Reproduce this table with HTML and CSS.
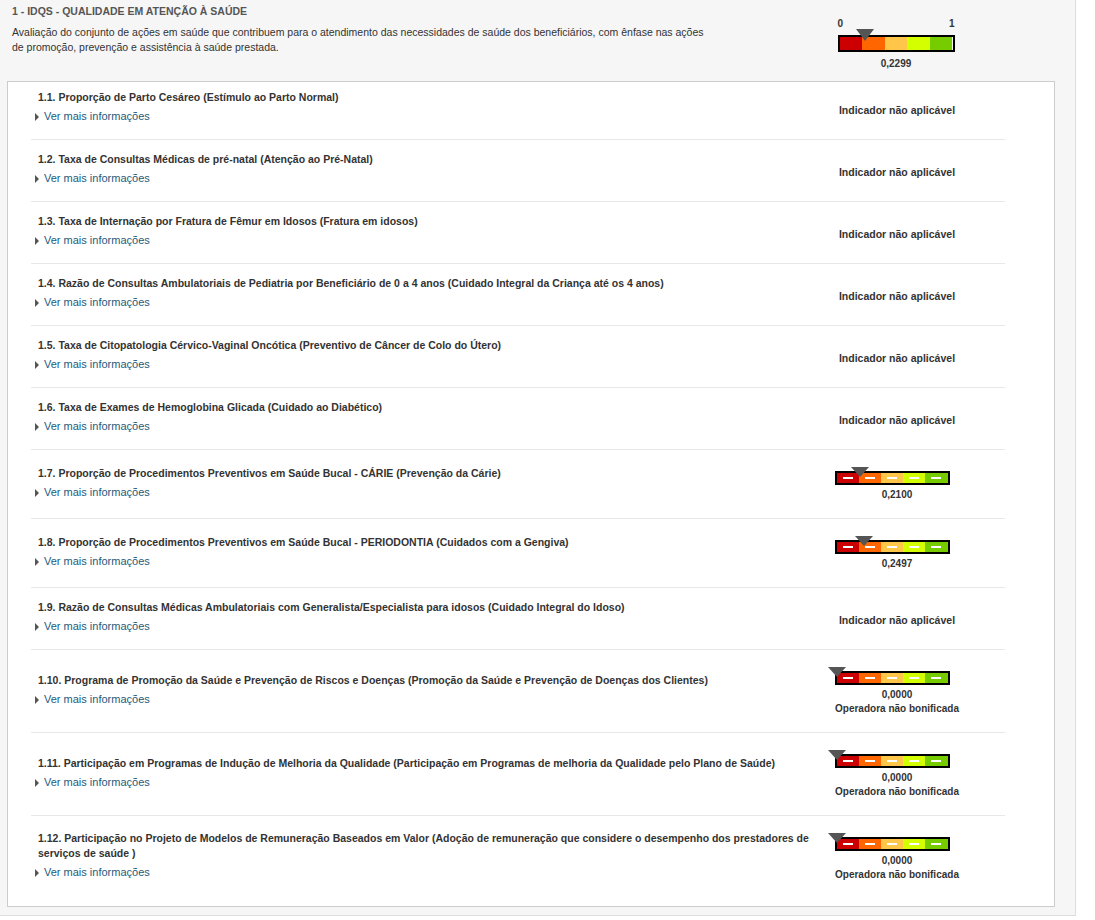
FILE: index.html
```
<!DOCTYPE html>
<html lang="pt-BR">
<head>
    <meta charset="UTF-8">
    <meta name="viewport" content="width=device-width, initial-scale=1.0">
    <title>IDQS - Qualidade em Atenção à Saúde</title>
    <link rel="stylesheet" href="styles.css">
</head>
<body>
    <div id="panel">
        <div class="dimHeader">
            <div class="dimText">
                <div class="dimTitle">1 - IDQS - QUALIDADE EM ATENÇÃO À SAÚDE</div>
                <div class="dimDesc">Avaliação do conjunto de ações em saúde que contribuem para o atendimento das necessidades de saúde dos beneficiários, com ênfase nas ações de promoção, prevenção e assistência à saúde prestada.</div>
            </div>
            <div class="dimGauge">
                <div class="scaleLabels"><span>0</span><span>1</span></div>
                <div class="bigBar">
                    <div class="marker big" style="left: 22.99%"></div>
                    <div class="seg c1"></div>
                    <div class="seg c2"></div>
                    <div class="seg c3"></div>
                    <div class="seg c4"></div>
                    <div class="seg c5"></div>
                </div>
                <div class="value">0,2299</div>
            </div>
        </div>

        <div id="list">
            <!-- 1.1 -->
            <div class="item first">
                <div class="itemText">
                    <div class="itemTitle">1.1. Proporção de Parto Cesáreo (Estímulo ao Parto Normal)</div>
                    <div class="more"><i></i>Ver mais informações</div>
                </div>
                <div class="itemResult"><div class="na">Indicador não aplicável</div></div>
            </div>

            <div class="item">
                <div class="itemText">
                    <div class="itemTitle">1.2. Taxa de Consultas Médicas de pré-natal (Atenção ao Pré-Natal)</div>
                    <div class="more"><i></i>Ver mais informações</div>
                </div>
                <div class="itemResult"><div class="na">Indicador não aplicável</div></div>
            </div>

            <div class="item">
                <div class="itemText">
                    <div class="itemTitle">1.3. Taxa de Internação por Fratura de Fêmur em Idosos (Fratura em idosos)</div>
                    <div class="more"><i></i>Ver mais informações</div>
                </div>
                <div class="itemResult"><div class="na">Indicador não aplicável</div></div>
            </div>

            <div class="item">
                <div class="itemText">
                    <div class="itemTitle">1.4. Razão de Consultas Ambulatoriais de Pediatria por Beneficiário de 0 a 4 anos (Cuidado Integral da Criança até os 4 anos)</div>
                    <div class="more"><i></i>Ver mais informações</div>
                </div>
                <div class="itemResult"><div class="na">Indicador não aplicável</div></div>
            </div>

            <div class="item">
                <div class="itemText">
                    <div class="itemTitle">1.5. Taxa de Citopatologia Cérvico-Vaginal Oncótica (Preventivo de Câncer de Colo do Útero)</div>
                    <div class="more"><i></i>Ver mais informações</div>
                </div>
                <div class="itemResult"><div class="na">Indicador não aplicável</div></div>
            </div>

            <div class="item">
                <div class="itemText">
                    <div class="itemTitle">1.6. Taxa de Exames de Hemoglobina Glicada (Cuidado ao Diabético)</div>
                    <div class="more"><i></i>Ver mais informações</div>
                </div>
                <div class="itemResult"><div class="na">Indicador não aplicável</div></div>
            </div>

            <div class="item">
                <div class="itemText">
                    <div class="itemTitle">1.7. Proporção de Procedimentos Preventivos em Saúde Bucal - CÁRIE (Prevenção da Cárie)</div>
                    <div class="more"><i></i>Ver mais informações</div>
                </div>
                <div class="itemResult">
                    <div class="gauge">
                        <div class="smallBar">
                            <div class="marker" style="left: 21%"></div>
                            <div class="seg c1"><span></span></div>
                            <div class="seg c2"><span></span></div>
                            <div class="seg c3"><span></span></div>
                            <div class="seg c4"><span></span></div>
                            <div class="seg c5"><span></span></div>
                        </div>
                        <div class="value">0,2100</div>
                    </div>
                </div>
            </div>

            <div class="item">
                <div class="itemText">
                    <div class="itemTitle">1.8. Proporção de Procedimentos Preventivos em Saúde Bucal - PERIODONTIA (Cuidados com a Gengiva)</div>
                    <div class="more"><i></i>Ver mais informações</div>
                </div>
                <div class="itemResult">
                    <div class="gauge">
                        <div class="smallBar">
                            <div class="marker" style="left: 24.97%"></div>
                            <div class="seg c1"><span></span></div>
                            <div class="seg c2"><span></span></div>
                            <div class="seg c3"><span></span></div>
                            <div class="seg c4"><span></span></div>
                            <div class="seg c5"><span></span></div>
                        </div>
                        <div class="value">0,2497</div>
                    </div>
                </div>
            </div>

            <div class="item">
                <div class="itemText">
                    <div class="itemTitle">1.9. Razão de Consultas Médicas Ambulatoriais com Generalista/Especialista para idosos (Cuidado Integral do Idoso)</div>
                    <div class="more"><i></i>Ver mais informações</div>
                </div>
                <div class="itemResult"><div class="na">Indicador não aplicável</div></div>
            </div>

            <div class="item">
                <div class="itemText">
                    <div class="itemTitle">1.10. Programa de Promoção da Saúde e Prevenção de Riscos e Doenças (Promoção da Saúde e Prevenção de Doenças dos Clientes)</div>
                    <div class="more"><i></i>Ver mais informações</div>
                </div>
                <div class="itemResult">
                    <div class="gauge">
                        <div class="smallBar">
                            <div class="marker" style="left: 0%"></div>
                            <div class="seg c1"><span></span></div>
                            <div class="seg c2"><span></span></div>
                            <div class="seg c3"><span></span></div>
                            <div class="seg c4"><span></span></div>
                            <div class="seg c5"><span></span></div>
                        </div>
                        <div class="value">0,0000</div>
                        <div class="value">Operadora não bonificada</div>
                    </div>
                </div>
            </div>

            <div class="item">
                <div class="itemText">
                    <div class="itemTitle">1.11. Participação em Programas de Indução de Melhoria da Qualidade (Participação em Programas de melhoria da Qualidade pelo Plano de Saúde)</div>
                    <div class="more"><i></i>Ver mais informações</div>
                </div>
                <div class="itemResult">
                    <div class="gauge">
                        <div class="smallBar">
                            <div class="marker" style="left: 0%"></div>
                            <div class="seg c1"><span></span></div>
                            <div class="seg c2"><span></span></div>
                            <div class="seg c3"><span></span></div>
                            <div class="seg c4"><span></span></div>
                            <div class="seg c5"><span></span></div>
                        </div>
                        <div class="value">0,0000</div>
                        <div class="value">Operadora não bonificada</div>
                    </div>
                </div>
            </div>

            <div class="item">
                <div class="itemText">
                    <div class="itemTitle">1.12. Participação no Projeto de Modelos de Remuneração Baseados em Valor (Adoção de remuneração que considere o desempenho dos prestadores de serviços de saúde )</div>
                    <div class="more"><i></i>Ver mais informações</div>
                </div>
                <div class="itemResult">
                    <div class="gauge">
                        <div class="smallBar">
                            <div class="marker" style="left: 0%"></div>
                            <div class="seg c1"><span></span></div>
                            <div class="seg c2"><span></span></div>
                            <div class="seg c3"><span></span></div>
                            <div class="seg c4"><span></span></div>
                            <div class="seg c5"><span></span></div>
                        </div>
                        <div class="value">0,0000</div>
                        <div class="value">Operadora não bonificada</div>
                    </div>
                </div>
            </div>
        </div>
    </div>
</body>
</html>
```

FILE: styles.css
```
*{
    margin: 0;
    padding: 0;
    box-sizing: border-box;
}

body{
    background-color: white;
    font-family: "Liberation Sans", Arial, sans-serif;
    font-size: 10.5px;
    color: #333333;
}

#panel{
    width: 1076px;
    background-color: #f6f6f6;
    border-right: 1px solid #dddddd;
    border-bottom: 1px solid #dddddd;
    padding: 0 20px 8px 7px;
}

/* cabeçalho da dimensão */
.dimHeader{
    height: 81px;
    display: flex;
    justify-content: space-between;
    padding: 4px 84px 0 5px;
}

.dimText{
    width: 700px;
}

.dimTitle{
    font-weight: 700;
    color: #555555;
    line-height: 15px;
    margin-bottom: 6px;
}

.dimDesc{
    line-height: 15px;
}

.dimGauge{
    width: 150px;
    display: flex;
    flex-direction: column;
    align-items: center;
    padding-top: 12px;
}

.scaleLabels{
    width: 117px;
    display: flex;
    justify-content: space-between;
    font-weight: 700;
    font-size: 10px;
    line-height: 15px;
    margin-bottom: 4px;
}

.bigBar{
    position: relative;
    width: 117px;
    height: 17px;
    border: 2px solid #000000;
    display: flex;
    margin-bottom: 5px;
}

/* lista de indicadores */
#list{
    background-color: white;
    border: 1px solid #cccccc;
    padding-bottom: 8px;
}

.item{
    display: flex;
    align-items: center;
    margin: 0 49px 0 23px;
    padding: 12px 33px 8px 7px;
    border-top: 1px solid #e8e8e8;
}

.item.first{
    border-top: none;
    padding-top: 8px;
}

.itemText{
    flex: 1;
    padding-bottom: 7px;
    margin-right: 6px;
}

.itemTitle{
    font-weight: 700;
    line-height: 15px;
    margin-bottom: 4px;
}

.more{
    color: #1d5b7b;
    font-size: 11px;
    line-height: 15px;
    margin-left: -3px;
    cursor: pointer;
}

.more i{
    display: inline-block;
    width: 0;
    height: 0;
    border-left: 4px solid #555555;
    border-top: 4px solid transparent;
    border-bottom: 4px solid transparent;
    margin-right: 5px;
    vertical-align: -1px;
}

.itemResult{
    width: 150px;
    display: flex;
    flex-direction: column;
    align-items: center;
}

.na{
    font-weight: 700;
    line-height: 15px;
}

.gauge{
    display: flex;
    flex-direction: column;
    align-items: center;
    padding: 9px 0 8px;
}

.smallBar{
    position: relative;
    width: 115px;
    height: 14px;
    border: 2px solid #000000;
    display: flex;
    margin: 0 10px 3px 0;
}

.seg{
    flex: 1;
    display: flex;
    justify-content: center;
    align-items: center;
}

.seg span{
    width: 10px;
    height: 2px;
    background-color: white;
}

.c1{ background-color: #cc0000; }
.c2{ background-color: #ff6600; }
.c3{ background-color: #ffc64a; }
.c4{ background-color: #d4ff00; }
.c5{ background-color: #77cc00; }

.marker{
    position: absolute;
    top: -6px;
    width: 0;
    height: 0;
    margin-left: -9px;
    border-left: 9px solid transparent;
    border-right: 9px solid transparent;
    border-top: 10px solid #555555;
    z-index: 2;
}

.marker.big{
    top: -8px;
    border-top-width: 12px;
}

.value{
    font-weight: 700;
    font-size: 10px;
    line-height: 14px;
}
```
